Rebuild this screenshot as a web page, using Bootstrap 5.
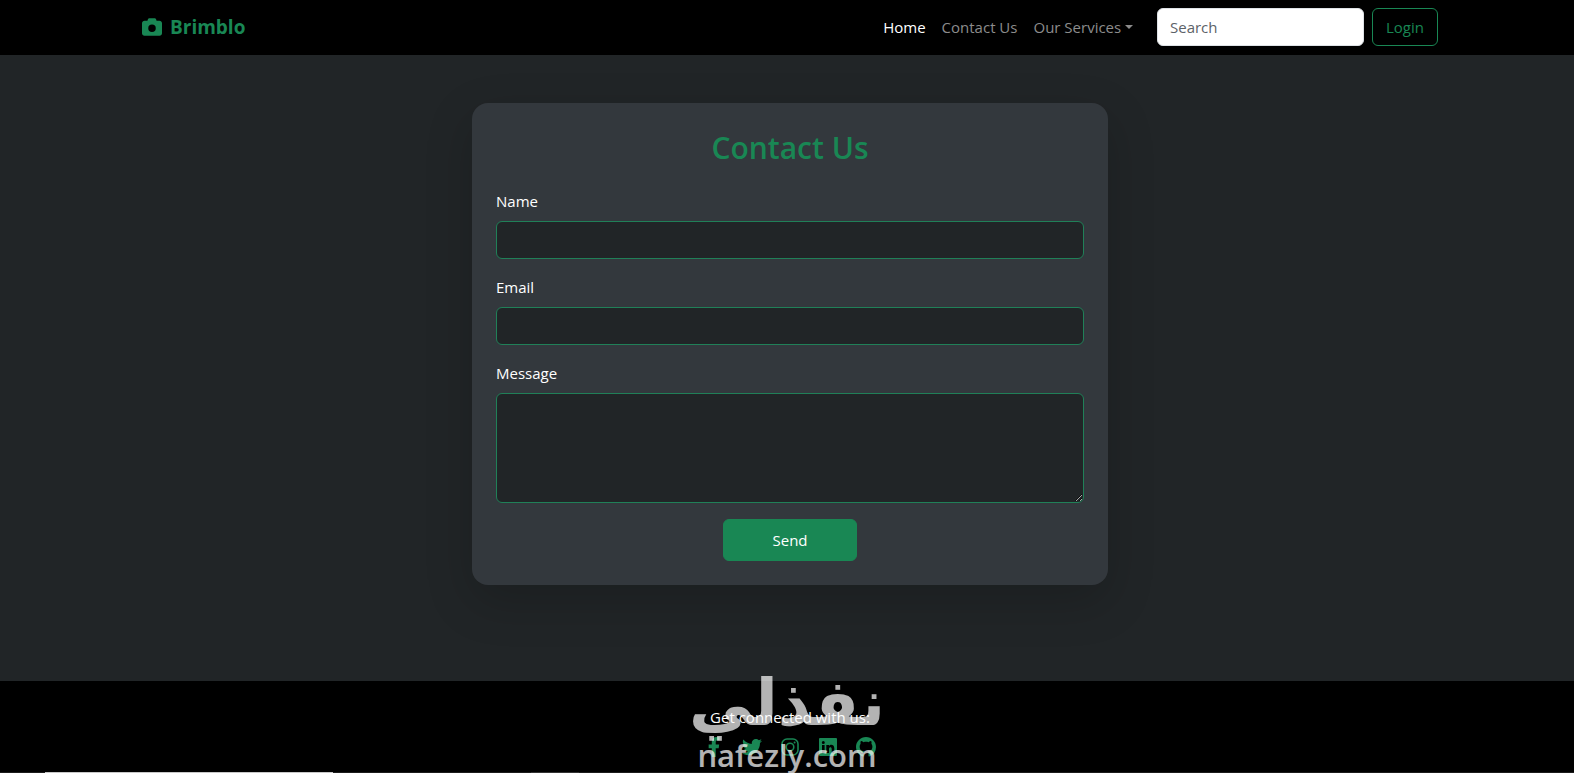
<!DOCTYPE html>
<html lang="en" data-bs-theme="dark">
<head>
<meta charset="utf-8">
<meta name="viewport" content="width=device-width, initial-scale=1">
<title>Brimblo - Contact Us</title>
<link href="https://cdn.jsdelivr.net/npm/bootstrap@5.3.0/dist/css/bootstrap.min.css" rel="stylesheet">
<style>
  body { font-family: "Open Sans", "Noto Sans", sans-serif; font-size: 16px; background: #212527; }
  .page-inner { padding-left: 15px; padding-right: 9px; }
  .site-nav { background: #000; padding: 8px 0 9px; }
  .site-nav .navbar-brand, .site-nav .navbar-brand:hover { color: #198754; font-size: 19px; line-height: 32px; font-weight: 700; }
  .site-nav .nav-link { color: #8c8c8c; font-size: 15px; }
  .site-nav .nav-link.active { color: #fff; }
  .search-box, .search-box:focus { width: 207px; background: #fff; color: #212529; border-color: #dee2e6; }
  .search-box::placeholder { color: #5c6268; }
  .form-control, .btn, .form-label { font-size: 15px; line-height: 24px; }
  .login-btn { min-width: 66px; }
  .main-area { padding: 48px 0 96px; }
  .contact-card { background: #33383d; border: 0; border-radius: 16px; box-shadow: 0 16px 48px rgba(0, 0, 0, .18); }
  .contact-card h2 { color: #198754; font-size: 30px; line-height: 42px; font-weight: 600; margin-bottom: 20px; }
  .contact-card .form-label { color: #fff; }
  .contact-card .form-control { background: #212527; border-color: #208058; color: #fff; }
  .site-footer { background: #000; color: #fff; font-size: 15px; line-height: 24px; }
  .social-links { gap: 18px; }
  .social-links a { color: #198754; display: flex; }
  .watermark { position: absolute; left: 0; right: 0; top: -14px; color: #fff; opacity: .7; pointer-events: none; }
  .wm-arabic { font: 700 64px/72px "DejaVu Sans", sans-serif; }
  .wm-latin { font: 600 31px/32px "Open Sans", sans-serif; }
  .dock-line { height: 1px; background: #1c1c1c; }
  .dock-line i { height: 1px; }
  .dock-a { width: 288px; margin-left: 45px; background: #c8c8c8; }
  .dock-b { width: 48px; margin-left: 198px; background: #333; }
</style>
</head>
<body class="min-vh-100 d-flex flex-column">
<nav class="navbar navbar-expand-lg site-nav">
  <div class="container page-inner">
    <a class="navbar-brand d-flex align-items-center gap-2 py-0" href="#">
      <svg width="20" height="20" viewBox="0 0 512 512" fill="currentColor" aria-hidden="true"><path d="M149 65 139 96H64C29 96 0 125 0 160v256c0 35 29 64 64 64h384c35 0 64-29 64-64V160c0-35-29-64-64-64h-75l-10-31C356 45 338 32 317 32H195c-21 0-39 13-46 33zM256 192a96 96 0 1 1 0 192 96 96 0 1 1 0-192z"/></svg>
      Brimblo
    </a>
    <button class="navbar-toggler" type="button" data-bs-toggle="collapse" data-bs-target="#menu" aria-label="Menu"><span class="navbar-toggler-icon"></span></button>
    <div class="collapse navbar-collapse" id="menu">
      <ul class="navbar-nav ms-auto me-3">
        <li class="nav-item"><a class="nav-link py-1 active" href="#">Home</a></li>
        <li class="nav-item"><a class="nav-link py-1" href="#">Contact Us</a></li>
        <li class="nav-item dropdown"><a class="nav-link py-1 dropdown-toggle" href="#" role="button" data-bs-toggle="dropdown">Our Services</a></li>
      </ul>
      <form class="d-flex gap-2" role="search">
        <input class="form-control search-box" type="search" placeholder="Search" aria-label="Search">
        <button class="btn btn-outline-success login-btn" type="button">Login</button>
      </form>
    </div>
  </div>
</nav>

<main class="main-area">
  <div class="container page-inner">
    <div class="row justify-content-center">
      <div class="col-lg-6">
        <div class="card contact-card p-4">
          <h2 class="text-center">Contact Us</h2>
          <form>
            <div class="mb-3">
              <label class="form-label d-block" for="name">Name</label>
              <input class="form-control" id="name" type="text">
            </div>
            <div class="mb-3">
              <label class="form-label d-block" for="email">Email</label>
              <input class="form-control" id="email" type="email">
            </div>
            <div class="mb-3">
              <label class="form-label d-block" for="message">Message</label>
              <textarea class="form-control d-block" id="message" rows="4"></textarea>
            </div>
            <div class="d-flex justify-content-center"><button class="btn btn-success px-5 py-2" type="submit">Send</button></div>
          </form>
        </div>
      </div>
    </div>
  </div>
</main>

<footer class="site-footer flex-grow-1 position-relative text-center">
  <div class="container page-inner pt-4">
    <p class="mb-2">Get connected with us:</p>
    <div class="d-flex justify-content-center social-links">
      <a href="#" aria-label="Facebook"><svg width="20" height="20" viewBox="0 0 320 512" fill="currentColor"><path d="M279 288l14-93h-89v-60c0-25 12-50 52-50h41V7s-37-7-72-7c-73 0-121 44-121 125v70H23v93h81v224h100V288z"/></svg></a>
      <a href="#" aria-label="Twitter"><svg width="20" height="20" viewBox="0 0 512 512" fill="currentColor"><path d="M459 152c1 4 1 9 1 13 0 139-106 299-299 299-59 0-115-17-161-47 8 1 16 1 25 1 49 0 94-17 130-45-46-1-85-31-98-73 6 1 13 2 20 2 9 0 19-1 28-4-48-10-84-52-84-103v-1c14 8 30 13 47 13-28-19-47-51-47-87 0-19 5-37 14-53 52 64 129 105 217 110-2-8-3-16-3-24 0-58 47-105 105-105 30 0 57 13 77 33 24-5 46-13 66-25-8 24-24 45-46 58 21-2 42-8 61-16-14 21-32 39-53 54z"/></svg></a>
      <a href="#" aria-label="Instagram"><svg width="20" height="20" viewBox="0 0 20 20" fill="none" stroke="currentColor" stroke-width="1.6"><rect x="2" y="2" width="16" height="16" rx="5"/><circle cx="10" cy="10" r="3.800"/><circle cx="14.600" cy="5.400" r="1" fill="currentColor" stroke="none"/></svg></a>
      <a href="#" aria-label="LinkedIn"><svg width="20" height="20" viewBox="0 0 20 20" fill="currentColor" fill-rule="evenodd"><path d="M2 1h16q1 0 1 1v16q0 1-1 1H2q-1 0-1-1V2q0-1 1-1zM4 8v8h2.600V8zM5.300 3.900a1.500 1.500 0 1 0 0 3 1.500 1.500 0 1 0 0-3zM8.300 8v8H11v-4c0-2.300 2.700-2.300 2.700 0v4h2.600v-4.700c0-3.900-4-4.300-5.300-2.200V8z"/></svg></a>
      <a href="#" aria-label="GitHub"><svg width="20" height="20" viewBox="0 0 16 16" fill="currentColor"><path d="M8 0C3.580 0 0 3.580 0 8c0 3.540 2.290 6.530 5.470 7.590.4.07.55-.17.55-.38 0-.19-.01-.82-.01-1.490-2.010.37-2.530-.49-2.690-.94-.09-.23-.48-.94-.82-1.130-.28-.15-.68-.52-.01-.53.63-.01 1.080.58 1.230.82.72 1.210 1.870.87 2.330.66.07-.52.28-.87.51-1.070-1.780-.2-3.640-.89-3.640-3.950 0-.87.31-1.590.82-2.150-.08-.2-.36-1.020.08-2.120 0 0 .67-.21 2.200.82.64-.18 1.320-.27 2-.27s1.360.09 2 .27c1.530-1.040 2.200-.82 2.200-.82.44 1.100.16 1.920.08 2.120.51.56.82 1.270.82 2.150 0 3.070-1.870 3.750-3.650 3.950.29.25.54.73.54 1.480 0 1.070-.01 1.930-.01 2.200 0 .21.15.46.55.38A8.010 8.010 0 0 0 16 8c0-4.420-3.580-8-8-8z"/></svg></a>
    </div>
  </div>
  <div class="watermark" aria-hidden="true">
    <div class="wm-arabic" lang="ar" dir="rtl">نفذلي</div>
    <div class="wm-latin">nafezly.com</div>
  </div>
</footer>
<div class="dock-line d-flex"><i class="dock-a"></i><i class="dock-b"></i></div>
<script src="https://cdn.jsdelivr.net/npm/bootstrap@5.3.0/dist/js/bootstrap.bundle.min.js"></script>
</body>
</html>
